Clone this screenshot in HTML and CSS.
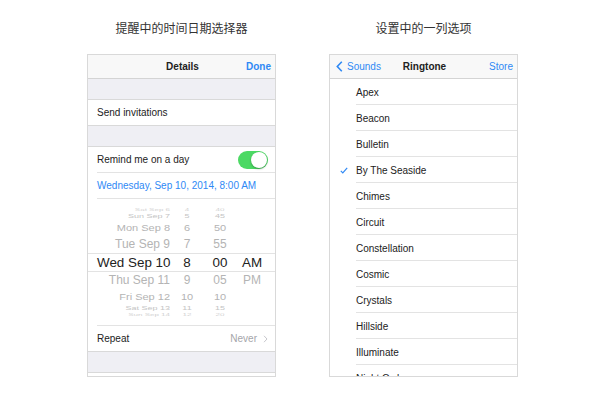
FILE: index.html
```html
<!DOCTYPE html>
<html>
<head lang="en">
    <meta charset="UTF-8">
    <title>iOS 选择器</title>
    <link rel="stylesheet" href="styles.css">
</head>
<body>
<div class="page">
    <div class="col">
        <div class="caption">提醒中的时间日期选择器</div>
        <div class="phone">
            <div class="nav">
                <span class="nav-left"></span>
                <span class="nav-title">Details</span>
                <span class="nav-right bold">Done</span>
            </div>
            <div class="gap"></div>
            <div class="group">
                <div class="cell">Send invitations</div>
            </div>
            <div class="gap"></div>
            <div class="group">
                <div class="cell cell-line">
                    <span>Remind me on a day</span>
                    <span class="switch"><i class="knob"></i></span>
                </div>
                <div class="cell cell-line blue">Wednesday, Sep 10, 2014, 8:00 AM</div>
                <div class="picker">
                    <div class="prow r0"><span class="pd">Sat Sep 6</span><span>4</span><span>40</span><span></span></div>
                    <div class="prow r1"><span class="pd">Sun Sep 7</span><span>5</span><span>45</span><span></span></div>
                    <div class="prow r2"><span class="pd">Mon Sep 8</span><span>6</span><span>50</span><span></span></div>
                    <div class="prow r3"><span class="pd">Tue Sep 9</span><span>7</span><span>55</span><span></span></div>
                    <div class="prow sel"><span class="pd">Wed Sep 10</span><span>8</span><span>00</span><span>AM</span></div>
                    <div class="prow r3"><span class="pd">Thu Sep 11</span><span>9</span><span>05</span><span>PM</span></div>
                    <div class="prow r2"><span class="pd">Fri Sep 12</span><span>10</span><span>10</span><span></span></div>
                    <div class="prow r1"><span class="pd">Sat Sep 13</span><span>11</span><span>15</span><span></span></div>
                    <div class="prow r0"><span class="pd">Sun Sep 14</span><span>12</span><span>20</span><span></span></div>
                </div>
                <div class="cell">
                    <span>Repeat</span>
                    <span class="detail">Never
                        <svg width="5" height="8" viewBox="0 0 5 8"><polyline points="1,0.8 4,4 1,7.2" fill="none" stroke="#c7c7cc" stroke-width="1"/></svg>
                    </span>
                </div>
            </div>
            <div class="gap"></div>
            <div class="group tail"></div>
        </div>
    </div>
    <div class="col">
        <div class="caption">设置中的一列选项</div>
        <div class="phone">
            <div class="nav">
                <span class="nav-left blue">
                    <svg width="7" height="11" viewBox="0 0 7 11"><polyline points="5.8,0.8 1.3,5.5 5.8,10.2" fill="none" stroke="#2f89f5" stroke-width="1.6"/></svg>
                    Sounds
                </span>
                <span class="nav-title">Ringtone</span>
                <span class="nav-right">Store</span>
            </div>
            <div class="list">
                <div class="item"><span class="txt">Apex</span></div>
                <div class="item"><span class="txt">Beacon</span></div>
                <div class="item"><span class="txt">Bulletin</span></div>
                <div class="item">
                    <svg class="check" width="8" height="7" viewBox="0 0 8 7"><polyline points="0.8,3.8 2.8,5.8 7.2,0.8" fill="none" stroke="#2f89f5" stroke-width="1.2"/></svg>
                    <span class="txt">By The Seaside</span>
                </div>
                <div class="item"><span class="txt">Chimes</span></div>
                <div class="item"><span class="txt">Circuit</span></div>
                <div class="item"><span class="txt">Constellation</span></div>
                <div class="item"><span class="txt">Cosmic</span></div>
                <div class="item"><span class="txt">Crystals</span></div>
                <div class="item"><span class="txt">Hillside</span></div>
                <div class="item"><span class="txt">Illuminate</span></div>
                <div class="item"><span class="txt">Night Owl</span></div>
            </div>
        </div>
    </div>
</div>
</body>
</html>
```

FILE: styles.css
```css
*{
    margin: 0;
    padding: 0;
    box-sizing: border-box;
}
body{
    background: #fff;
    font-family: "Liberation Sans", "Noto Sans CJK SC", sans-serif;
    color: #222;
}
.page{
    display: flex;
    gap: 53px;
    padding: 21px 0 0 87px;
}
.col{
    width: 189px;
}
.caption{
    height: 16px;
    line-height: 16px;
    font-size: 12px;
    color: #333;
    text-align: center;
    margin-bottom: 17px;
}
.phone{
    height: 323px;
    border: 1px solid #d9d9d9;
    overflow: hidden;
    background: #efeff4;
    font-size: 10px;
}
.blue{
    color: #2f89f5;
}
.bold{
    font-weight: bold;
}
.nav{
    height: 24px;
    background: #f8f8f8;
    border-bottom: 1px solid #d4d4d4;
    display: grid;
    grid-template-columns: 1fr auto 1fr;
    align-items: center;
    padding: 0 4px 0 6px;
    font-size: 10px;
}
.nav-left{
    display: flex;
    align-items: center;
    gap: 4px;
}
.nav-title{
    font-weight: bold;
    color: #222;
}
.nav-right{
    color: #2f89f5;
    text-align: right;
}
.gap{
    height: 20px;
}
.group{
    background: #fff;
    border-top: 1px solid #d9d9d9;
    border-bottom: 1px solid #d9d9d9;
}
.cell{
    height: 25px;
    margin-left: 9px;
    padding-right: 7px;
    display: flex;
    align-items: center;
    justify-content: space-between;
}
.cell-line{
    height: 26px;
    border-bottom: 1px solid #e3e3e3;
}
.cell.blue{
    color: #2f89f5;
}
.switch{
    width: 30px;
    height: 18px;
    border-radius: 9px;
    background: #4cd964;
    position: relative;
}
.knob{
    position: absolute;
    right: 1px;
    top: 1px;
    width: 16px;
    height: 16px;
    border-radius: 50%;
    background: #fff;
    box-shadow: 0 1px 2px rgba(0,0,0,0.3);
}
.detail{
    color: #a5a5aa;
    display: flex;
    align-items: center;
    gap: 6px;
}
.picker{
    height: 127px;
    padding-top: 8px;
    border-bottom: 1px solid #e3e3e3;
    margin-left: 9px;
}
.prow{
    display: grid;
    grid-template-columns: 73px 34px 32px 32px;
    margin-left: -9px;
    padding-left: 9px;
    text-align: center;
    color: #b4b4b4;
    white-space: nowrap;
}
.prow span{
    display: block;
}
.prow .pd{
    text-align: right;
}
.r0{
    height: 6px;
    line-height: 6px;
    font-size: 8px;
    color: #d2d2d2;
}
.r0 span{
    transform: scaleY(.4);
}
.r1{
    height: 7px;
    line-height: 7px;
    font-size: 9px;
    color: #c4c4c4;
}
.r1 span{
    transform: scaleY(.6);
}
.r2{
    height: 16px;
    line-height: 16px;
    font-size: 11px;
}
.r2 span{
    transform: scaleY(.85);
}
.r3{
    height: 17px;
    line-height: 17px;
    font-size: 12px;
}
.sel{
    height: 19px;
    line-height: 17px;
    font-size: 13.4px;
    color: #222;
    border-top: 1px solid #e3e3e3;
    border-bottom: 1px solid #e3e3e3;
    margin-right: -1px;
}
.tail{
    height: 10px;
    border-bottom: none;
}
.list{
    background: #fff;
}
.item{
    height: 26px;
    position: relative;
    margin-left: 26px;
    border-bottom: 1px solid #e3e3e3;
    display: flex;
    align-items: center;
    padding-top: 1px;
    color: #222;
}
.check{
    position: absolute;
    left: -16px;
    top: 10px;
}
```
